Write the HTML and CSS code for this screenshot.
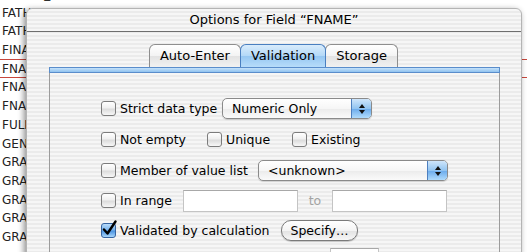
FILE: index.html
```html
<!DOCTYPE html>
<html lang="en">
<head>
    <meta charset="UTF-8">
    <title>Options for Field</title>
    <link rel="stylesheet" href="styles.css">
</head>
<body>
    <!-- field list behind the dialog -->
    <div class="list">
        <div class="row">GRADE_YR</div>
        <div class="row">FATHER_NAME</div>
        <div class="row">FATHER_JOB</div>
        <div class="row mark">FINAL_GRADE</div>
        <div class="row mark">FNAME</div>
        <div class="row">FNAME_ALT</div>
        <div class="row">FNAME_NICK</div>
        <div class="row">FULL_NAME</div>
        <div class="row">GENDER</div>
        <div class="row">GRADE_1</div>
        <div class="row">GRADE_2</div>
        <div class="row">GRADE_3</div>
        <div class="row">GRADE_4</div>
        <div class="row">GRADE_5</div>
    </div>

    <div class="sheet">
        <div class="titlebar">Options for Field “FNAME”</div>

        <div class="tabs">
            <div class="tab">Auto-Enter</div>
            <div class="tab active">Validation</div>
            <div class="tab">Storage</div>
        </div>

        <div class="panel">
            <div class="band"></div>
            <div class="panel-body">
                <div class="opt-row">
                    <label class="check w-strict"><span class="box"></span>Strict data type</label>
                    <div class="popup popup-type">
                        <span class="popup-text">Numeric Only</span>
                        <span class="popup-arrows">
                            <svg width="8" height="12" viewBox="0 0 8 12"><polygon points="4,1 7,5 1,5" fill="#111"/><polygon points="1,7 7,7 4,11" fill="#111"/></svg>
                        </span>
                    </div>
                </div>

                <div class="opt-row">
                    <label class="check w-empty"><span class="box"></span>Not empty</label>
                    <label class="check w-unique"><span class="box"></span>Unique</label>
                    <label class="check"><span class="box"></span>Existing</label>
                </div>

                <div class="opt-row">
                    <label class="check w-member"><span class="box"></span>Member of value list</label>
                    <div class="popup popup-list">
                        <span class="popup-text">&lt;unknown&gt;</span>
                        <span class="popup-arrows">
                            <svg width="8" height="12" viewBox="0 0 8 12"><polygon points="4,1 7,5 1,5" fill="#111"/><polygon points="1,7 7,7 4,11" fill="#111"/></svg>
                        </span>
                    </div>
                </div>

                <div class="opt-row range-row">
                    <label class="check w-range"><span class="box"></span>In range</label>
                    <div class="field"></div>
                    <span class="to">to</span>
                    <div class="field"></div>
                </div>

                <div class="opt-row">
                    <label class="check w-calc">
                        <span class="box checked">
                            <svg class="tick" width="16" height="17" viewBox="0 0 16 17"><path d="M3 9.5 L6.5 13.5 L14.5 1.5" fill="none" stroke="#000" stroke-width="2.4" stroke-linecap="round" stroke-linejoin="round"/></svg>
                        </span>Validated by calculation
                    </label>
                    <div class="button">Specify…</div>
                </div>

                <!-- next row, only its field shows above the fold -->
                <div class="opt-row last-row">
                    <div class="field small"></div>
                </div>
            </div>
        </div>
    </div>
</body>
</html>
```

FILE: styles.css
```css
html, body {
    margin: 0;
    height: 252px;
    overflow: hidden;
}
body {
    font-family: "DejaVu Sans", sans-serif;
    background: #fff;
    position: relative;
}

/* list behind the sheet */
.list {
    margin-top: -15px;
    font-size: 12px;
    color: #222;
}
.row {
    height: 18.7px;
    line-height: 18.7px;
    padding-left: 2px;
}
.row.mark {
    box-shadow: inset 0 -1px #c8473c;
}

/* the sheet itself */
.sheet {
    position: absolute;
    left: 26px;
    top: 8px;
    width: 494px;
    height: 260px;
    border: 1px solid #b4b4b4;
    border-radius: 6px 6px 0 0;
    box-shadow: -2px 2px 6px rgba(0,0,0,0.45);
    background: repeating-linear-gradient(to bottom, #f6f6f6 0, #f6f6f6 2px, #ebebeb 2px, #ebebeb 4px);
    font-size: 12.5px;
    color: #000;
}
.titlebar {
    height: 22px;
    line-height: 22px;
    border-bottom: 1px solid #6f6f6f;
    text-align: center;
    font-size: 13px;
}

.tabs {
    display: flex;
    justify-content: center;
    margin-top: 12px;
    height: 23px;
}
.tab {
    height: 22px;
    line-height: 22px;
    padding: 0 10px;
    font-size: 13px;
    border: 1px solid #8e8e8e;
    border-bottom: none;
    border-radius: 6px 6px 0 0;
    background: linear-gradient(to bottom, #ffffff, #f3f3f3 50%, #e3e3e3 51%, #f1f1f1);
    margin-left: -1px;
}
.tab.active {
    position: relative;
    border-color: #4a7fc0;
    background: linear-gradient(to bottom, #d9ecfc, #b3d8f7 50%, #96c7f2 51%, #b7dcfa);
}

.panel {
    margin: 0 21px 0 22px;
    border: 1px solid #9c9c9c;
    border-top: none;
    height: 200px;
}
.band {
    height: 4px;
    margin: 0 -1px;
    border: 1px solid #5a8dcb;
    background: linear-gradient(to bottom, #c5e2fa, #8fc2ef);
}
.panel-body {
    padding: 20px 0 0 51px;
}

.opt-row {
    display: flex;
    align-items: center;
    height: 31px;
}
.range-row {
    height: 29px;
}
.last-row {
    height: 22px;
    margin-top: 2px;
    padding-left: 229px;
}

.check {
    display: flex;
    align-items: center;
    gap: 4px;
    white-space: nowrap;
}
.w-strict { width: 121px; }
.w-empty { width: 106px; }
.w-unique { width: 85px; }
.w-member { width: 157px; }
.w-range { width: 82px; }
.w-calc { width: 180px; }

.box {
    position: relative;
    width: 13px;
    height: 13px;
    border: 1px solid #7c7c7c;
    border-radius: 3px;
    background: linear-gradient(to bottom, #ffffff, #f0f0f0 45%, #dcdcdc 55%, #f7f7f7);
    flex: none;
}
.box.checked {
    border-color: #35639f;
    background: linear-gradient(to bottom, #b9dcfb, #78b3ec 45%, #4d95e2 55%, #a8d6fb);
}
.tick {
    position: absolute;
    left: -1px;
    top: -4px;
}

.popup {
    display: flex;
    height: 19px;
    border: 1px solid #8a8a8a;
    border-radius: 5px;
    background: linear-gradient(to bottom, #ffffff, #f6f6f6 50%, #ebebeb 51%, #fafafa);
    box-shadow: 0 1px 1px rgba(0,0,0,0.15);
    overflow: hidden;
}
.popup-type { width: 148px; }
.popup-list { width: 188px; }
.popup-text {
    flex: 1;
    line-height: 19px;
    padding-left: 9px;
}
.popup-arrows {
    width: 19px;
    display: flex;
    align-items: center;
    justify-content: center;
    border-left: 1px solid #4d7fbf;
    background: linear-gradient(to bottom, #cfe6fb, #92c4f1 50%, #6aaaeb 51%, #b0dbfc);
}

.field {
    width: 113px;
    height: 20px;
    border: 1px solid #c4c4c4;
    border-top-color: #a8a8a8;
    background: #fff;
}
.field.small {
    width: 47px;
}
.to {
    width: 34px;
    text-align: center;
    color: #a3a3a3;
}

.button {
    width: 75px;
    height: 19px;
    line-height: 19px;
    text-align: center;
    border: 1px solid #7a7a7a;
    border-radius: 10px;
    background: linear-gradient(to bottom, #ffffff, #f4f4f4 50%, #e2e2e2 51%, #f7f7f7);
    box-shadow: 0 1px 1px rgba(0,0,0,0.2);
}
```
